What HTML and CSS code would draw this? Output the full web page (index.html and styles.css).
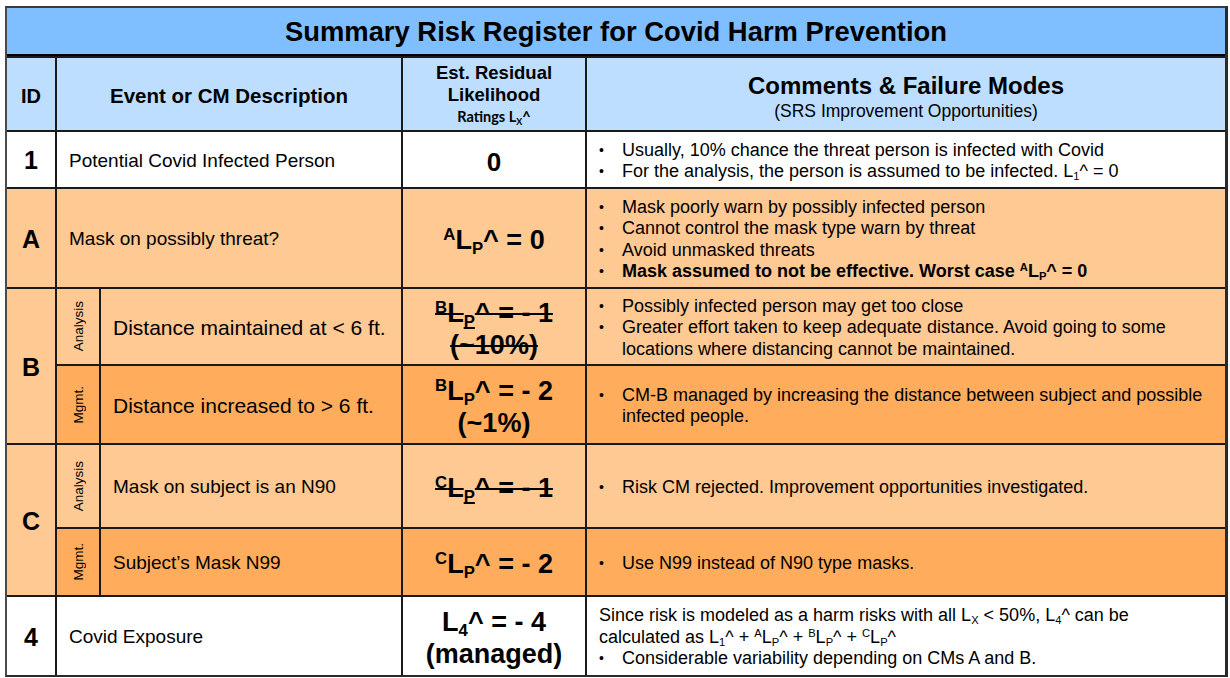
FILE: index.html
```html
<!DOCTYPE html>
<html>
<head>
<meta charset="utf-8">
<link rel="stylesheet" href="styles.css">
</head>
<body>
<div class="sheet">
  <div class="title">Summary Risk Register for Covid Harm Prevention</div>

  <div class="c hd idc idh">ID</div>
  <div class="c hd span2 desc-h">Event or CM Description</div>
  <div class="c hd est-h">
    <div class="est-h-main">Est. Residual<br>Likelihood</div>
    <div class="ratings">Ratings L<span class="sb">X</span>^</div>
  </div>
  <div class="c hd com-h">
    <div class="com-title">Comments &amp; Failure Modes</div>
    <div class="com-sub">(SRS Improvement Opportunities)</div>
  </div>

  <div class="c white idc idv">1</div>
  <div class="c white span2 desc">Potential Covid Infected Person</div>
  <div class="c white est est-sm">0</div>
  <div class="c white com">
    <ul class="bl">
      <li><span>Usually, 10% chance the threat person is infected with Covid</span></li>
      <li><span>For the analysis, the person is assumed to be infected. L<span class="sb">1</span>^ = 0</span></li>
    </ul>
  </div>

  <div class="c lo idc idv">A</div>
  <div class="c lo span2 desc">Mask on possibly threat?</div>
  <div class="c lo est"><span><span class="sp">A</span>L<span class="sb">P</span>^ = 0</span></div>
  <div class="c lo com">
    <ul class="bl">
      <li><span>Mask poorly warn by possibly infected person</span></li>
      <li><span>Cannot control the mask type warn by threat</span></li>
      <li><span>Avoid unmasked threats</span></li>
      <li class="b"><span>Mask assumed to not be effective. Worst case <span class="sp">A</span>L<span class="sb">P</span>^ = 0</span></li>
    </ul>
  </div>

  <div class="c lo idc idv span-r">B</div>
  <div class="c lo lblc"><span class="lbl">Analysis</span></div>
  <div class="c lo desc desc-lg">Distance maintained at &lt; 6 ft.</div>
  <div class="c lo est"><div><span class="strike"><span class="sp">B</span>L<span class="sb">P</span>^ = - 1</span><br><span class="strike">(~10%)</span></div></div>
  <div class="c lo com">
    <ul class="bl">
      <li><span>Possibly infected person may get too close</span></li>
      <li><span>Greater effort taken to keep adequate distance. Avoid going to some locations where distancing cannot be maintained.</span></li>
    </ul>
  </div>

  <div class="c do lblc"><span class="lbl">Mgmt.</span></div>
  <div class="c do desc desc-lg">Distance increased to &gt; 6 ft.</div>
  <div class="c do est"><div><span class="sp">B</span>L<span class="sb">P</span>^ = - 2<br>(~1%)</div></div>
  <div class="c do com">
    <ul class="bl">
      <li><span>CM-B managed by increasing the distance between subject and possible infected people.</span></li>
    </ul>
  </div>

  <div class="c lo idc idv span-r">C</div>
  <div class="c lo lblc"><span class="lbl">Analysis</span></div>
  <div class="c lo desc">Mask on subject is an N90</div>
  <div class="c lo est"><span class="strike"><span class="sp">C</span>L<span class="sb">P</span>^ = - 1</span></div>
  <div class="c lo com">
    <ul class="bl">
      <li><span>Risk CM rejected. Improvement opportunities investigated.</span></li>
    </ul>
  </div>

  <div class="c do lblc"><span class="lbl">Mgmt.</span></div>
  <div class="c do desc">Subject’s Mask N99</div>
  <div class="c do est"><span><span class="sp">C</span>L<span class="sb">P</span>^ = - 2</span></div>
  <div class="c do com">
    <ul class="bl">
      <li><span>Use N99 instead of N90 type masks.</span></li>
    </ul>
  </div>

  <div class="c white idc idv">4</div>
  <div class="c white span2 desc">Covid Exposure</div>
  <div class="c white est"><div>L<span class="sb">4</span>^ = - 4<br>(managed)</div></div>
  <div class="c white com">
    <div class="com-body">
      <p class="para">Since risk is modeled as a harm risks with all L<span class="sb">X</span> &lt; 50%, L<span class="sb">4</span>^ can be calculated as L<span class="sb">1</span>^ + <span class="sp">A</span>L<span class="sb">P</span>^ + <span class="sp">B</span>L<span class="sb">P</span>^ + <span class="sp">C</span>L<span class="sb">P</span>^</p>
      <ul class="bl">
        <li><span>Considerable variability depending on CMs A and B.</span></li>
      </ul>
    </div>
  </div>
</div>
</body>
</html>
```

FILE: styles.css
```css
html, body {
  margin: 0;
  padding: 0;
  background: #ffffff;
}

body {
  padding: 6px 0 0 5px;
  font-family: "Liberation Sans", Arial, sans-serif;
  color: #000;
}

.sheet {
  display: grid;
  grid-template-columns: 48px 42px 300px 182px 638px;
  grid-template-rows: 48px 72px 55px 98px 75px 77px 82px 66px 78px;
  gap: 2px;
  background: #1a1a1a;
  border-top: 2px solid #3a3a3a;
  border-left: 2px solid #4a4a4a;
  border-right: 3px solid #2a2a2a;
  border-bottom: 2px solid #2a2a2a;
  width: max-content;
}

.title {
  grid-column: 1 / -1;
  background: #80bfff;
  border-bottom: 2px solid #000;
  display: flex;
  align-items: center;
  justify-content: center;
  font-weight: bold;
  font-size: 27.4px;
  padding-top: 2px;
}

.c {
  display: flex;
  align-items: center;
  min-width: 0;
  padding-top: 2px;
}

.span2 { grid-column: span 2; }
.span-r { grid-row: span 2; }

.hd {
  background: #bddeff;
  font-weight: bold;
  justify-content: center;
  text-align: center;
}

.white { background: #ffffff; }
.lo { background: #ffc993; }
.do { background: #ffad5c; }

.idc {
  justify-content: center;
  font-size: 20px;
  font-weight: bold;
}

.idh {
  padding-top: 5px;
}

.idv {
  font-size: 25px;
}

.desc-h {
  font-size: 20.5px;
  padding-top: 4px;
}

.est-h {
  flex-direction: column;
  justify-content: center;
}

.est-h-main {
  font-size: 18.5px;
  line-height: 22px;
}

.ratings {
  font-family: Lato, "Liberation Sans", sans-serif;
  font-size: 14.5px;
  line-height: 22px;
}

.com-h {
  flex-direction: column;
  justify-content: center;
  padding-top: 5px;
}

.com-title {
  font-size: 24px;
  line-height: 28px;
}

.com-sub {
  font-size: 17.5px;
  font-weight: normal;
  line-height: 22px;
}

.desc {
  padding-left: 12px;
  font-size: 19px;
}

.desc-lg {
  font-size: 21px;
}

.lblc {
  justify-content: center;
  padding-top: 0;
}

.lbl {
  writing-mode: vertical-rl;
  transform: rotate(180deg);
  font-size: 13.5px;
}

.est {
  justify-content: center;
  text-align: center;
  font-weight: bold;
  font-size: 27px;
  line-height: 32px;
  padding-top: 4px;
}

.est-sm {
  font-size: 26px;
}

.strike {
  text-decoration: line-through;
  text-decoration-thickness: 2px;
}

.sb {
  font-size: 0.62em;
  vertical-align: -0.3em;
  line-height: 0;
}

.sp {
  font-size: 0.62em;
  vertical-align: 0.55em;
  line-height: 0;
}

.com {
  padding-left: 12px;
  padding-right: 14px;
  padding-top: 3px;
  font-size: 18px;
  line-height: 21.5px;
}

.com-body {
  display: flex;
  flex-direction: column;
}

.para {
  margin: 0;
}

.bl {
  list-style: none;
  margin: 0;
  padding: 0;
}

.bl li {
  display: grid;
  grid-template-columns: 23px 1fr;
}

.bl li::before {
  content: "•";
  font-size: 14px;
  font-weight: normal;
}

.bl li.b {
  font-weight: bold;
}
```
